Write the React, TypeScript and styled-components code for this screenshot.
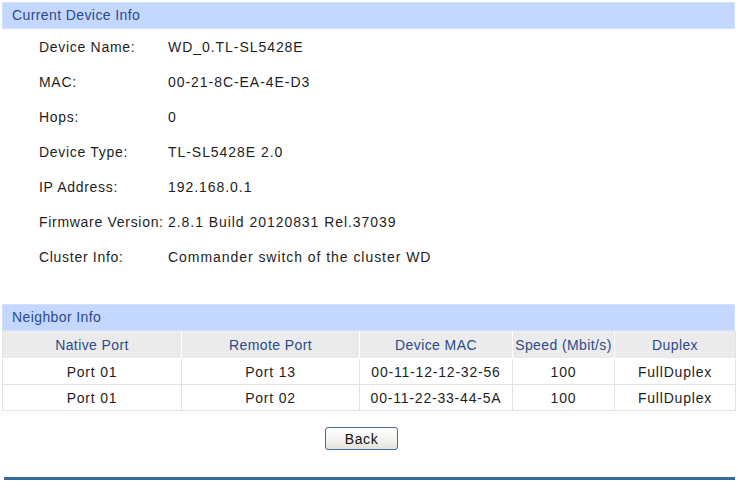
import styled, { createGlobalStyle } from "styled-components";

const GlobalStyle = createGlobalStyle`
  html, body {
    margin: 0;
    padding: 0;
    background: #ffffff;
  }
  body {
    font-family: "Liberation Sans", Arial, sans-serif;
    color: #1a1a1a;
  }
`;

const deviceInfo: [string, string][] = [
  ["Device Name:", "WD_0.TL-SL5428E"],
  ["MAC:", "00-21-8C-EA-4E-D3"],
  ["Hops:", "0"],
  ["Device Type:", "TL-SL5428E 2.0"],
  ["IP Address:", "192.168.0.1"],
  ["Firmware Version:", "2.8.1 Build 20120831 Rel.37039"],
  ["Cluster Info:", "Commander switch of the cluster WD"],
];

const neighbors = [
  { native: "Port 01", remote: "Port 13", mac: "00-11-12-12-32-56", speed: "100", duplex: "FullDuplex" },
  { native: "Port 01", remote: "Port 02", mac: "00-11-22-33-44-5A", speed: "100", duplex: "FullDuplex" },
];

const columns = [
  { title: "Native Port", width: 179 },
  { title: "Remote Port", width: 178 },
  { title: "Device MAC", width: 153 },
  { title: "Speed (Mbit/s)", width: 102 },
  { title: "Duplex", width: 121 },
];

const App: React.FunctionComponent = () => {
  return (
    <>
      <GlobalStyle />
      <Page>
        <SectionTitle>Current Device Info</SectionTitle>
        <InfoList>
          {deviceInfo.map(([label, value]) => (
            <InfoRow key={label}>
              <InfoLabel>{label}</InfoLabel>
              <InfoValue>{value}</InfoValue>
            </InfoRow>
          ))}
        </InfoList>

        <SectionTitle $top={30}>Neighbor Info</SectionTitle>
        <NeighborTable>
          <colgroup>
            {columns.map((c) => (
              <col key={c.title} style={{ width: c.width }} />
            ))}
          </colgroup>
          <thead>
            <tr>
              {columns.map((c) => (
                <HeadCell key={c.title}>{c.title}</HeadCell>
              ))}
            </tr>
          </thead>
          <tbody>
            {neighbors.map((n, i) => (
              <tr key={i}>
                <Cell>{n.native}</Cell>
                <Cell>{n.remote}</Cell>
                <Cell>{n.mac}</Cell>
                <Cell>{n.speed}</Cell>
                <Cell>{n.duplex}</Cell>
              </tr>
            ))}
          </tbody>
        </NeighborTable>

        <ButtonRow>
          <BackButton type="button">Back</BackButton>
        </ButtonRow>

        <BottomRule />
      </Page>
    </>
  );
};

const Page = styled.div`
  width: 738px;
  padding: 2px 3px 0 2px;
  box-sizing: border-box;
  display: flex;
  flex-direction: column;
`;

const SectionTitle = styled.div<{ $top?: number }>`
  margin-top: ${({ $top }) => $top ?? 0}px;
  height: 27px;
  box-sizing: border-box;
  background: #c4d8ff;
  border: 1px solid #d2e1ff;
  color: #2a4a8a;
  font-size: 14px;
  letter-spacing: 0.4px;
  line-height: 25px;
  padding-left: 9px;
`;

const InfoList = styled.div`
  display: flex;
  flex-direction: column;
`;

const InfoRow = styled.div`
  display: flex;
  align-items: center;
  height: 35px;
  padding-left: 37px;
  font-size: 14px;
  color: #1e1e1e;
`;

const InfoLabel = styled.span`
  width: 129px;
  flex-shrink: 0;
  white-space: nowrap;
  letter-spacing: 0.7px;
`;

const InfoValue = styled.span`
  white-space: nowrap;
  letter-spacing: 0.95px;
`;

const NeighborTable = styled.table`
  width: 733px;
  table-layout: fixed;
  border-collapse: collapse;
  font-size: 14px;
  letter-spacing: 0.8px;
`;

const HeadCell = styled.th`
  height: 27px;
  padding: 0;
  background: #ebebeb;
  color: #2a4a8a;
  font-weight: normal;
  letter-spacing: 0.4px;
  text-align: center;
  white-space: nowrap;
  border: 1px solid #ffffff;
  border-top: none;
  &:first-child {
    border-left: 1px solid #e2e2e2;
  }
  &:last-child {
    border-right: 1px solid #e2e2e2;
  }
`;

const Cell = styled.td`
  height: 25px;
  padding: 0;
  text-align: center;
  white-space: nowrap;
  color: #1e1e1e;
  border: 1px solid #e2e2e2;
`;

const ButtonRow = styled.div`
  display: flex;
  justify-content: center;
  padding-right: 14px;
  margin-top: 16px;
`;

const BackButton = styled.button`
  width: 73px;
  height: 23px;
  padding: 0;
  border: 1px solid #3f6b9e;
  border-radius: 3px;
  background: linear-gradient(#ffffff, #f3f2ee 60%, #e4e2da);
  font-family: "Liberation Sans", Arial, sans-serif;
  font-size: 14px;
  letter-spacing: 0.6px;
  color: #111;
  cursor: pointer;
`;

const BottomRule = styled.div`
  margin: 27px 0 0 2px;
  height: 3px;
  background: #35699a;
`;

export default App;
